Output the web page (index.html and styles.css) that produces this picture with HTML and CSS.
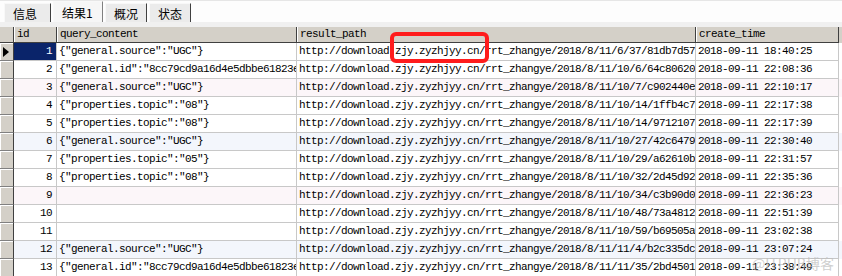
FILE: index.html
```html
<!DOCTYPE html>
<html lang="zh">
<head>
  <meta charset="UTF-8">
  <title>结果1</title>
  <link rel="stylesheet" href="styles.css">
</head>
<body>
  <div class="tabbar">
    <div class="tab">信息</div>
    <div class="tab active">结果1</div>
    <div class="tab">概况</div>
    <div class="tab">状态</div>
  </div>
  <div class="band"></div>

  <div class="grid">
    <div class="row head">
      <div class="cell ind"></div>
      <div class="cell">id</div>
      <div class="cell">query_content</div>
      <div class="cell">result_path</div>
      <div class="cell">create_time</div>
    </div>

    <div class="row">
      <div class="cell ind"><span class="arrow"></span></div>
      <div class="cell num selected">1</div>
      <div class="cell">{"general.source":"UGC"}</div>
      <div class="cell">http://download.zjy.zyzhjyy.cn/rrt_zhangye/2018/8/11/6/37/81db7d57.json</div>
      <div class="cell">2018-09-11 18:40:25</div>
    </div>
    <div class="row">
      <div class="cell ind"></div>
      <div class="cell num">2</div>
      <div class="cell">{"general.id":"8cc79cd9a16d4e5dbbe61823e0"}</div>
      <div class="cell">http://download.zjy.zyzhjyy.cn/rrt_zhangye/2018/8/11/10/6/64c80620.json</div>
      <div class="cell">2018-09-11 22:08:36</div>
    </div>
    <div class="row pink">
      <div class="cell ind"></div>
      <div class="cell num">3</div>
      <div class="cell">{"general.source":"UGC"}</div>
      <div class="cell">http://download.zjy.zyzhjyy.cn/rrt_zhangye/2018/8/11/10/7/c902440e.json</div>
      <div class="cell">2018-09-11 22:10:17</div>
    </div>
    <div class="row">
      <div class="cell ind"></div>
      <div class="cell num">4</div>
      <div class="cell">{"properties.topic":"08"}</div>
      <div class="cell">http://download.zjy.zyzhjyy.cn/rrt_zhangye/2018/8/11/10/14/1ffb4c7e.json</div>
      <div class="cell">2018-09-11 22:17:38</div>
    </div>
    <div class="row">
      <div class="cell ind"></div>
      <div class="cell num">5</div>
      <div class="cell">{"properties.topic":"08"}</div>
      <div class="cell">http://download.zjy.zyzhjyy.cn/rrt_zhangye/2018/8/11/10/14/97121078.json</div>
      <div class="cell">2018-09-11 22:17:39</div>
    </div>
    <div class="row blue">
      <div class="cell ind"></div>
      <div class="cell num">6</div>
      <div class="cell">{"general.source":"UGC"}</div>
      <div class="cell">http://download.zjy.zyzhjyy.cn/rrt_zhangye/2018/8/11/10/27/42c64790.json</div>
      <div class="cell">2018-09-11 22:30:40</div>
    </div>
    <div class="row">
      <div class="cell ind"></div>
      <div class="cell num">7</div>
      <div class="cell">{"properties.topic":"05"}</div>
      <div class="cell">http://download.zjy.zyzhjyy.cn/rrt_zhangye/2018/8/11/10/29/a62610b4.json</div>
      <div class="cell">2018-09-11 22:31:57</div>
    </div>
    <div class="row">
      <div class="cell ind"></div>
      <div class="cell num">8</div>
      <div class="cell">{"properties.topic":"08"}</div>
      <div class="cell">http://download.zjy.zyzhjyy.cn/rrt_zhangye/2018/8/11/10/32/2d45d921.json</div>
      <div class="cell">2018-09-11 22:35:36</div>
    </div>
    <div class="row pink">
      <div class="cell ind"></div>
      <div class="cell num">9</div>
      <div class="cell"></div>
      <div class="cell">http://download.zjy.zyzhjyy.cn/rrt_zhangye/2018/8/11/10/34/c3b90d05.json</div>
      <div class="cell">2018-09-11 22:36:23</div>
    </div>
    <div class="row">
      <div class="cell ind"></div>
      <div class="cell num">10</div>
      <div class="cell"></div>
      <div class="cell">http://download.zjy.zyzhjyy.cn/rrt_zhangye/2018/8/11/10/48/73a48126.json</div>
      <div class="cell">2018-09-11 22:51:39</div>
    </div>
    <div class="row">
      <div class="cell ind"></div>
      <div class="cell num">11</div>
      <div class="cell"></div>
      <div class="cell">http://download.zjy.zyzhjyy.cn/rrt_zhangye/2018/8/11/10/59/b69505a3.json</div>
      <div class="cell">2018-09-11 23:02:38</div>
    </div>
    <div class="row blue">
      <div class="cell ind"></div>
      <div class="cell num">12</div>
      <div class="cell">{"general.source":"UGC"}</div>
      <div class="cell">http://download.zjy.zyzhjyy.cn/rrt_zhangye/2018/8/11/11/4/b2c335dc.json</div>
      <div class="cell">2018-09-11 23:07:24</div>
    </div>
    <div class="row">
      <div class="cell ind"></div>
      <div class="cell num">13</div>
      <div class="cell">{"general.id":"8cc79cd9a16d4e5dbbe61823e0"}</div>
      <div class="cell">http://download.zjy.zyzhjyy.cn/rrt_zhangye/2018/8/11/11/35/2bd45019.json</div>
      <div class="cell">2018-09-11 23:38:49</div>
    </div>
  </div>

  <!-- annotation + watermark over the grid -->
  <div class="mark-box"></div>
  <div class="watermark">@ITPUB博客</div>
</body>
</html>
```

FILE: styles.css
```css
:root {
  --face: #d4d0c8;
  --dark: #404040;
  --line: #c8c8c8;
  --select: #0a246a;
}
body {
  margin: 0;
  width: 842px;
  height: 276px;
  overflow: hidden;
  position: relative;
  background: #ffffff;
  font-family: 'Liberation Mono', monospace;
  font-size: 11px;
  color: #000;
}
.tabbar {
  height: 21px;
  display: flex;
  align-items: flex-end;
  padding-left: 4px;
  border-top: 1px solid #e6e6e6;
  background: #fdfdfd;
}
.tab {
  height: 19px;
  line-height: 19px;
  padding: 0 8px;
  margin-right: 2px;
  background: #ebebeb;
  border-top: 1px solid #f8f8f8;
  border-left: 1px solid #f8f8f8;
  border-right: 1px solid var(--dark);
  box-sizing: border-box;
  font-family: 'Noto Sans CJK SC', sans-serif;
  font-size: 12px;
}
.tab:first-child {
  width: 47px;
}
.tab.active {
  height: 21px;
  line-height: 22px;
  width: 50px;
  background: #f6f6f6;
  border-right-color: #808080;
}
.band {
  height: 5px;
  background: #f0f0f0;
}
.grid {
  display: flex;
  flex-direction: column;
}
.row {
  display: grid;
  grid-template-columns: 14px 43px 240px 399px 143px;
  height: 18px;
}
.row.pink {
  background: #fcf6f9;
}
.row.blue {
  background: #f3f6fc;
}
.cell {
  box-sizing: border-box;
  border-right: 1px solid var(--line);
  border-bottom: 1px solid var(--line);
  padding: 0 2px;
  line-height: 17px;
  white-space: nowrap;
  overflow: hidden;
  letter-spacing: -0.6px;
}
.cell.num {
  text-align: right;
  padding-right: 4px;
}
.cell.selected {
  background: var(--select);
  color: #fff;
}
.cell.ind {
  background: var(--face);
  border-right: 1px solid var(--dark);
  border-bottom: 1px solid #808080;
  box-shadow: inset 1px 1px #ffffff;
  position: relative;
}
.head {
  height: 16px;
  background: var(--face);
}
.head .cell {
  line-height: 15px;
  border-right: 1px solid var(--dark);
  border-bottom: 1px solid var(--dark);
  box-shadow: inset 1px 0 #ffffff;
  padding-left: 3px;
}
.head .cell.ind {
  box-shadow: none;
}
.arrow {
  position: absolute;
  left: 3px;
  top: 4px;
  width: 0;
  height: 0;
  border-top: 5px solid transparent;
  border-bottom: 5px solid transparent;
  border-left: 6px solid #000;
}
.mark-box {
  position: absolute;
  left: 390px;
  top: 32px;
  width: 99px;
  height: 31px;
  box-sizing: border-box;
  border: 4px solid #ff1c1c;
  border-radius: 6px;
}
.watermark {
  position: absolute;
  right: 8px;
  bottom: 3px;
  font-family: 'Noto Sans CJK SC', sans-serif;
  font-size: 14px;
  color: rgba(190, 190, 190, 0.75);
  letter-spacing: 0;
}
```
